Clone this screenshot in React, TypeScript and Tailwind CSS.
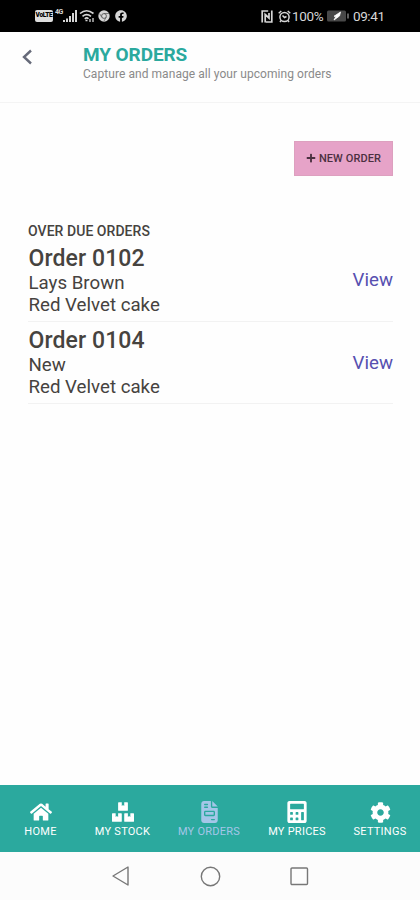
import React from "react";
import { FaBoxes, FaCalculator, FaCog, FaFacebook, FaHome, FaPlus } from "react-icons/fa";
import { FaFileInvoice } from "react-icons/fa6";

const orders = [
  { id: "0102", customer: "Lays Brown", item: "Red Velvet cake" },
  { id: "0104", customer: "New", item: "Red Velvet cake" },
];

function StatusBar() {
  return (
    <div className="flex h-8 shrink-0 items-center justify-between bg-black pr-[35px] pl-[35px] text-[#d6d6d6]">
      <div className="flex items-center">
        <span className="flex h-3 w-[18px] items-center justify-center rounded-[2px] bg-[#dedede] text-[6.5px] font-black tracking-[-0.3px] text-black">VoLTE</span>
        <span className="ml-[2px] -mt-2 w-[8px] text-[7px] leading-none font-bold tracking-[-0.4px]">4G</span>
        <svg className="h-[13px] w-[14px]" viewBox="0 0 14 13" fill="currentColor">
          <path d="M0 10h2v2H0zM3 8.500h2V12H3zM6 6h2v6H6zM9 3h2v9H9zM12 0h2v12h-2z" />
        </svg>
        <svg className="ml-[2px] h-[14px] w-[16px]" viewBox="0 0 16 14" fill="none" stroke="currentColor" strokeWidth="1.600">
          <path d="M1 4.500Q7.500-1 14.500 4.500M3.500 7.300Q7.500 4 12 7.300M5.800 9.800Q7.700 8 9.500 9.800" />
          <path d="M6.500 11.500h2M11 10v3M14 9v4" strokeWidth="1.300" />
        </svg>
        <svg className="ml-[3px] h-3 w-3" viewBox="0 0 12 12">
          <circle cx="6" cy="6" r="5.700" fill="currentColor" />
          <circle cx="6" cy="6" r="2.400" fill="#ddd" stroke="#444" strokeWidth=".8" />
          <path d="M6 3.500h5M3.800 7.300 1.500 3.500M8.200 7.300 5.800 11.300" stroke="#555" strokeWidth=".7" />
        </svg>
        <FaFacebook className="ml-[5px] h-3 w-3" />
      </div>
      <div className="flex items-center">
        <svg className="h-[13px] w-[12px]" viewBox="0 0 12 13" fill="none" stroke="currentColor">
          <path d="M1.200 12.500V1h6M4.200 12.500V4.500L8 8V3M10.800.5V12h-6" strokeWidth="1.700" />
        </svg>
        <svg className="ml-[5px] h-[13px] w-[13px]" viewBox="0 0 13 13" fill="none" stroke="currentColor" strokeWidth="1.500">
          <circle cx="6.500" cy="7" r="4.600" />
          <path d="M.7 3.200 3.300 1M12.300 3.200 9.700 1M4.500 5.500 6.500 7.500 8.500 6.500M3 10.500 2 12M10 10.500l1 1.500" />
        </svg>
        <span className="mt-px ml-px w-[34px] text-[13.500px] leading-none tracking-[-0.3px]">100%</span>
        <svg className="h-3 w-[24px]" viewBox="0 0 24 12">
          <rect x="1" y=".5" width="19" height="11" rx="1.500" fill="#484848" />
          <path d="M22 3.500v5" stroke="#777" strokeWidth="1.600" />
          <path d="M14.500 2 8 6.300h2L8 10l5.500-4z" fill="#fff" stroke="#fff" strokeWidth=".8" />
        </svg>
        <span className="mt-px ml-[3px] w-[32px] text-[13.500px] leading-none tracking-[-0.4px]">09:41</span>
      </div>
    </div>
  );
}

function NavItem({ icon, label, className }: { icon: React.ReactNode; label: string; className: string }) {
  return (
    <div className={`flex flex-col items-center pt-4 ${className}`}>
      <div className="flex h-[22px] items-center justify-center">{icon}</div>
      <span className="mt-[2px] text-[11px] leading-[14px] whitespace-nowrap tracking-[0.25px]">{label}</span>
    </div>
  );
}

export default function App() {
  return (
    <div className="flex h-[900px] w-[420px] flex-col overflow-hidden bg-[#fefefe] font-['Roboto',sans-serif] text-[#46433f]">
      <StatusBar />
      <header className="flex h-[71px] shrink-0 border-b border-[#f4f4f4]">
        <svg className="mt-[16px] ml-[21px] h-[18px] w-3" viewBox="0 0 12 18" fill="none" stroke="#666a79" strokeWidth="2.400">
          <path d="M10 2.500 3 9l7 6.500" />
        </svg>
        <div className="ml-[50px] pt-3">
          <h1 className="text-[19px] leading-[22px] font-bold tracking-[-0.1px] text-[#2ba99e]">MY ORDERS</h1>
          <p className="mt-px text-[12px] leading-[14px] tracking-[0.06px] text-[#8a8a8a]">Capture and manage all your upcoming orders</p>
        </div>
      </header>
      <main className="flex-1 pr-[27px] pl-[28px]">
        <div className="flex justify-end pt-[38px]">
          <button className="flex h-[35px] w-[99px] items-center justify-center gap-[3px] border border-[#dda0bf] bg-[#e6a3c8] text-[11px] font-medium text-[#4b3040]">
            <FaPlus className="-mt-px h-[10px] w-[10px]" />
            <span className="mt-px tracking-[0.1px]">NEW ORDER</span>
          </button>
        </div>
        <h2 className="mt-[46px] pt-px text-[14px] leading-4 font-medium tracking-[0.05px]">OVER DUE ORDERS</h2>
        {orders.map((order) => (
          <div key={order.id} className="flex h-[82.500px] items-center justify-between border-b border-[#f2f2f2] pt-px">
            <div className="pl-[0.5px]">
              <h3 className="text-[23px] leading-[27px] font-medium tracking-[0.1px]">Order {order.id}</h3>
              <p className="text-[18.7px] leading-[22px]">{order.customer}</p>
              <p className="text-[18.7px] leading-[22px]">{order.item}</p>
            </div>
            <a className="text-[18.7px] leading-[22px] text-[#5750b0]">View</a>
          </div>
        ))}
      </main>
      <nav className="flex h-[67px] shrink-0 bg-[#2ba99e] text-white">
        <NavItem className="w-[81px]" label="HOME" icon={<FaHome className="h-[22px] w-[22px]" />} />
        <NavItem className="w-[83px]" label="MY STOCK" icon={<FaBoxes className="h-[22px] w-[22px]" />} />
        <NavItem className="w-[90px] text-[#a4c6e8]" label="MY ORDERS" icon={<FaFileInvoice className="h-[22px] w-[17px]" />} />
        <NavItem className="w-[86px]" label="MY PRICES" icon={<FaCalculator className="h-[22px] w-[20px]" />} />
        <NavItem className="w-[80px]" label="SETTINGS" icon={<FaCog className="h-[21px] w-[21px]" />} />
      </nav>
      <div className="flex h-[48px] shrink-0 items-center bg-[#fcfcfc] pl-[111px] text-[#777]">
        <svg className="h-[22px] w-[19px]" viewBox="0 0 19 22" fill="none" stroke="currentColor" strokeWidth="1.400">
          <path d="M17 2v18L2 11z" strokeLinejoin="round" />
        </svg>
        <svg className="ml-[70px] h-[22px] w-[22px]" viewBox="0 0 22 22" fill="none" stroke="currentColor" strokeWidth="1.400">
          <circle cx="10.500" cy="11.500" r="9.200" />
        </svg>
        <svg className="ml-[67px] h-[20px] w-[20px]" viewBox="0 0 20 20" fill="none" stroke="currentColor" strokeWidth="1.400">
          <rect x="2" y="2" width="16.500" height="16.500" rx="1" />
        </svg>
      </div>
    </div>
  );
}
